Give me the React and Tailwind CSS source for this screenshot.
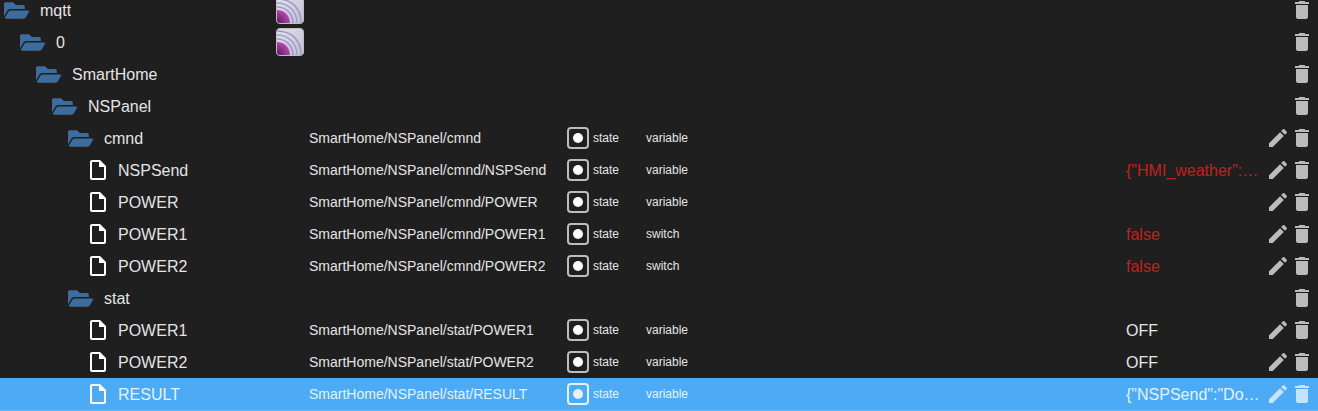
import { FaFolderOpen } from "react-icons/fa";
import { MdDelete, MdEdit, MdOutlineInsertDriveFile } from "react-icons/md";

const rows = [
  { name: "mqtt", level: 0, folder: true, logo: true },
  { name: "0", level: 1, folder: true, logo: true },
  { name: "SmartHome", level: 2, folder: true },
  { name: "NSPanel", level: 3, folder: true },
  { name: "cmnd", level: 4, folder: true, path: "SmartHome/NSPanel/cmnd", role: "variable", edit: true },
  { name: "NSPSend", level: 5, path: "SmartHome/NSPanel/cmnd/NSPSend", role: "variable", value: '{"HMI_weather":"Sunny","temp":21}', red: true, edit: true },
  { name: "POWER", level: 5, path: "SmartHome/NSPanel/cmnd/POWER", role: "variable", edit: true },
  { name: "POWER1", level: 5, path: "SmartHome/NSPanel/cmnd/POWER1", role: "switch", value: "false", red: true, edit: true },
  { name: "POWER2", level: 5, path: "SmartHome/NSPanel/cmnd/POWER2", role: "switch", value: "false", red: true, edit: true },
  { name: "stat", level: 4, folder: true },
  { name: "POWER1", level: 5, path: "SmartHome/NSPanel/stat/POWER1", role: "variable", value: "OFF", edit: true },
  { name: "POWER2", level: 5, path: "SmartHome/NSPanel/stat/POWER2", role: "variable", value: "OFF", edit: true },
  { name: "RESULT", level: 5, path: "SmartHome/NSPanel/stat/RESULT", role: "variable", value: '{"NSPSend":"Done","Status":"OK"}', edit: true, selected: true },
];

// left offset of the icon for each tree level
const levelClasses = ["pl-[4px]", "pl-[20px]", "pl-[36px]", "pl-[52px]", "pl-[68px]", "pl-[86px]"];

function AdapterLogo({ id }) {
  return (
    <svg width="28" height="28" viewBox="0 0 28 28" className="block">
      <defs>
        <linearGradient id={`bg${id}`} x1="0" y1="0" x2="1" y2="1">
          <stop offset="0" stopColor="#e4e1ee" />
          <stop offset="1" stopColor="#c2bdd8" />
        </linearGradient>
        <radialGradient id={`arc${id}`} cx="0" cy="1" r="1">
          <stop offset="0" stopColor="#5c1560" />
          <stop offset="1" stopColor="#b548ae" />
        </radialGradient>
      </defs>
      <rect x="0.5" y="0.5" width="27" height="27" rx="3.5" fill={`url(#bg${id})`} stroke="#bdbdbd" />
      <path d="M1 3C16 3 25 12 25 27" fill="none" stroke="#9f99bf" strokeWidth="1.5" />
      <path d="M1 7C12 7 21 15 21 27" fill="none" stroke="#a6a0c4" strokeWidth="1.5" />
      <path d="M1 11C10 11 17 18 17 27" fill="none" stroke="#9f99bf" strokeWidth="1.5" />
      <path d="M1 14C9 14 14 20 14 27H4C2 27 1 26 1 24Z" fill={`url(#arc${id})`} />
    </svg>
  );
}

function Row({ row, id }) {
  const bg = row.selected ? "box-content border-b border-[#64b5f6] bg-[#4dabf5]" : "";
  const text = row.selected ? "text-[#e3f2fd]" : "text-[#e4e4e4]";
  const actions = row.selected ? "text-[#c5e3fb]" : "text-[#bbbbbb]";
  const valueColor = row.red ? "text-[#c41f1f]" : text;
  return (
    <div className={`grid h-[32px] grid-cols-[276px_33px_258px_79px_480px_136px_1fr] items-center ${bg} ${text}`}>
      <div className={`flex items-center ${levelClasses[row.level]}`}>
        {row.folder ? (
          <FaFolderOpen size={25} className="mr-[11px] shrink-0 text-[#3f6c9e]" />
        ) : (
          <MdOutlineInsertDriveFile size={24} className="mr-[8px] shrink-0 text-white" />
        )}
        <span className="truncate pt-[2px] text-[16px]">{row.name}</span>
      </div>
      <div>{row.logo && <AdapterLogo id={id} />}</div>
      <div className="truncate text-[14px]">{row.path}</div>
      <div className="flex items-center gap-[4px] text-[12px]">
        {row.path && (
          <>
            <span className={`flex h-[22px] w-[22px] items-center justify-center rounded-[4px] border-2 ${row.selected ? "border-[#e3f2fd]" : "border-[#bdbdbd]"}`}>
              <span className={`h-[10px] w-[10px] rounded-full ${row.selected ? "bg-[#e3f2fd]" : "bg-white"}`} />
            </span>
            <span>state</span>
          </>
        )}
      </div>
      <div className="text-[12px]">{row.role}</div>
      <div className={`truncate pt-[2px] text-[16px] ${valueColor}`}>{row.value}</div>
      <div className={`flex items-center justify-end pr-[4px] ${actions}`}>
        {row.edit && <MdEdit size={24} />}
        <MdDelete size={24} />
      </div>
    </div>
  );
}

export default function App() {
  return (
    <div className="h-[411px] w-[1318px] overflow-hidden bg-[#1f1f1f] font-['Liberation_Sans',Arial,sans-serif]">
      <div className="-mt-[6px]">
        {rows.map((row, i) => (
          <Row key={i} row={row} id={i} />
        ))}
      </div>
    </div>
  );
}
